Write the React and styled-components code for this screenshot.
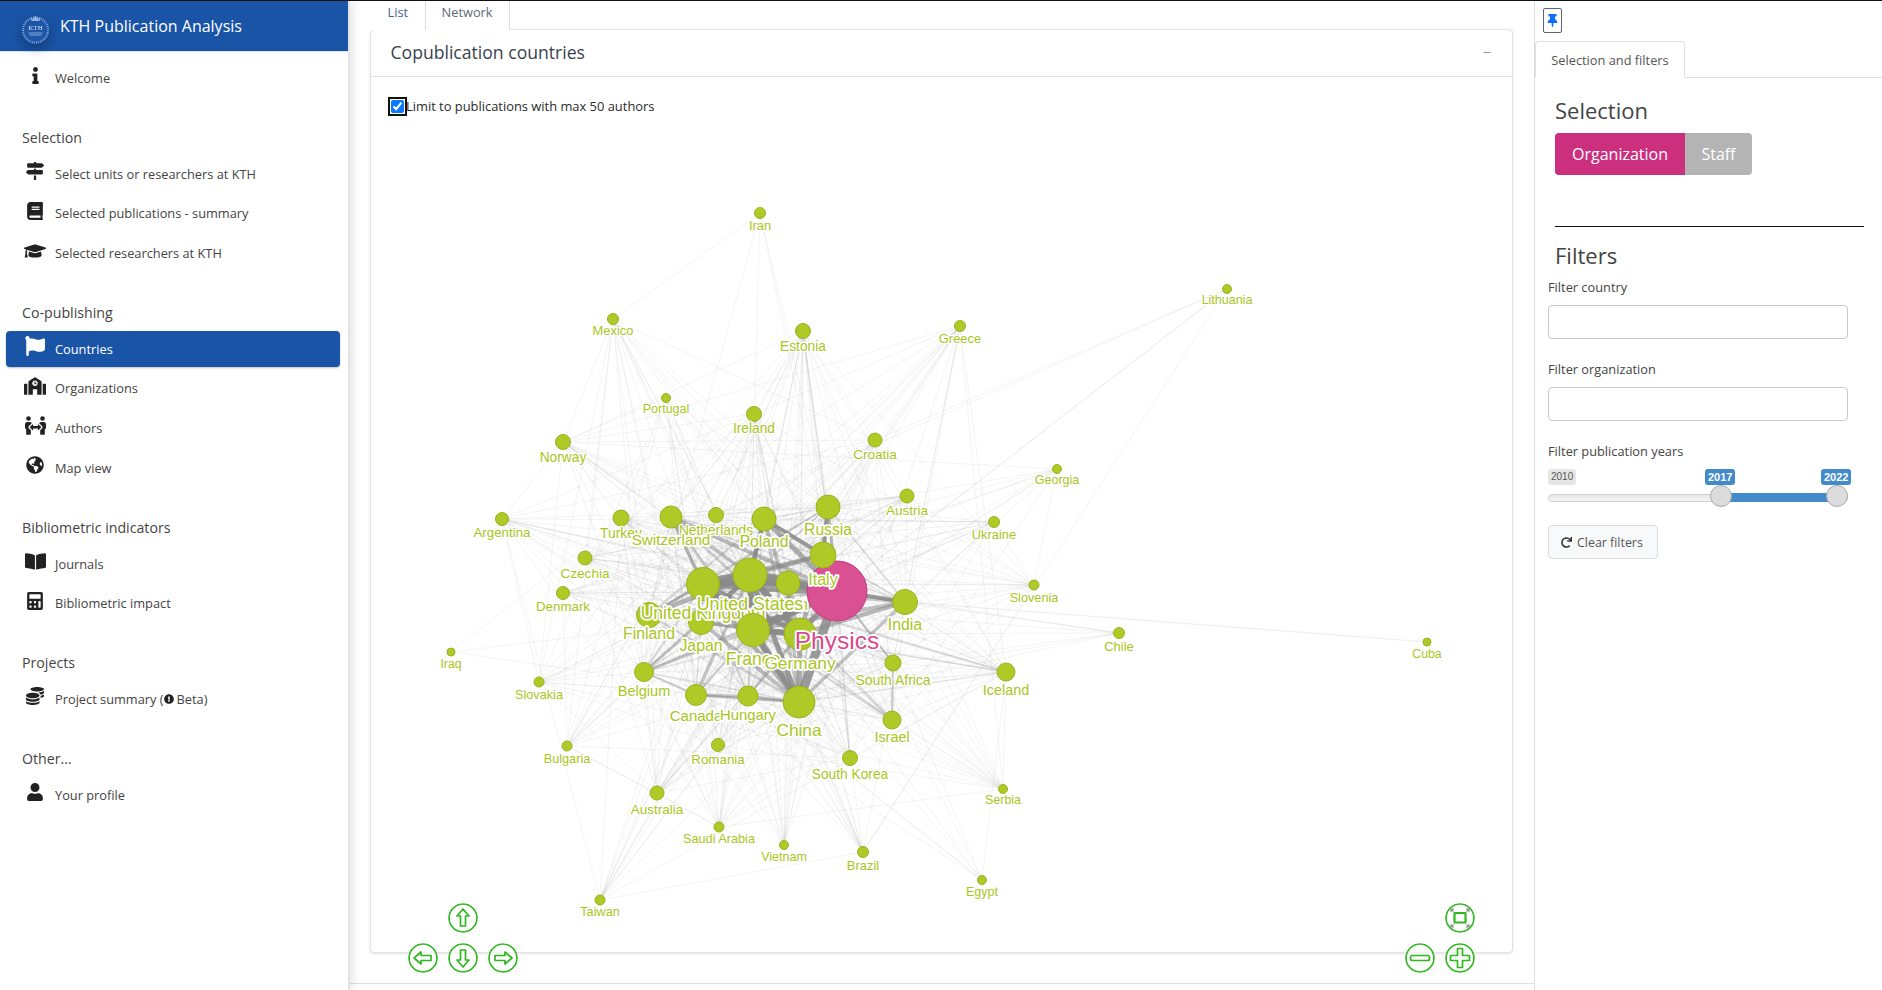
import React from "react";
import styled, { createGlobalStyle } from "styled-components";
import {
  FaInfo, FaMapSigns, FaBook, FaGraduationCap, FaFlag, FaSchool, FaPeopleArrows,
  FaGlobeAmericas, FaBookOpen, FaCalculator, FaCoins, FaUser, FaExclamationCircle,
  FaThumbtack, FaRedo,
} from "react-icons/fa";

const Global = createGlobalStyle`
  html, body { margin: 0; padding: 0; height: 100%; background: #fff; overflow: hidden; }
  body { font-family: "Open Sans", "Liberation Sans", sans-serif; font-size: 13px; color: #444; }
  * { box-sizing: border-box; }
`;

const Page = styled.div`
  display: grid;
  grid-template-columns: 350px 1184px 348px;
  height: 990px;
  border-top: 1px solid #111;
`;

/* ---------- sidebar ---------- */
const Sidebar = styled.aside`
  border-right: 2px solid #e3e3e6;
  box-shadow: 3px 0 8px rgba(0, 0, 0, 0.1);
  background: #fff;
  z-index: 2;
`;
const Brand = styled.header`
  height: 51px;
  background: #1a54a6;
  display: flex;
  align-items: center;
  gap: 9px;
  padding-left: 20px;
  color: #fff;
  font-size: 16px;
  border-bottom: 1px solid #dbe3ee;
`;
const LogoWrap = styled.svg`
  width: 31px;
  height: 36px;
  margin-top: 1px;
  overflow: visible;
  filter: drop-shadow(0 5px 6px rgba(0, 0, 0, 0.28));
`;
const Nav = styled.nav`
  padding-top: 8px;
`;
const NavItem = styled.div`
  height: 36px;
  margin: ${(p) => (p.$first ? "0" : "3.7px")} 8px 0 6px;
  padding-left: 16px;
  display: flex;
  align-items: center;
  border-radius: 4px;
  background: ${(p) => (p.$active ? "#1a54a6" : "transparent")};
  color: ${(p) => (p.$active ? "#fff" : "#444")};
  box-shadow: ${(p) => (p.$active ? "0 1px 2px rgba(0,0,0,.25)" : "none")};
  font-size: 12.8px;
`;
const NavIcon = styled.span`
  width: 26px;
  margin-right: 7px;
  display: flex;
  justify-content: center;
  margin-bottom: 5px;
  font-size: ${(p) => p.$size || 18}px;
  color: ${(p) => (p.$active ? "#fff" : "#222")};
`;
const InlineIcon = styled.span`
  display: inline-flex;
  font-size: 10px;
  color: #222;
  margin: 0 3px 0 0;
  vertical-align: 0;
`;
const NavSection = styled.section`
  margin-top: 31.7px;
`;
const NavTitle = styled.h4`
  margin: 0 0 8px 22px;
  height: 20px;
  line-height: 20px;
  font-size: 14.2px;
  font-weight: 400;
  color: #444;
`;

/* ---------- main ---------- */
const Main = styled.main`
  height: 983px;
  border-bottom: 1px solid #e2e2e2;
  padding: 0 21px 0 20px;
  background: #fff;
`;
const Tabs = styled.div`
  display: flex;
  height: 28px;
  padding-left: 1px;
`;
const TabLink = styled.div`
  padding: 0 ${(p) => (p.$active ? "16px" : "15.5px")};
  height: 29px;
  line-height: 22px;
  font-size: 12.8px;
  color: ${(p) => (p.$active ? "#5b6b7a" : "#44688a")};
  border: 1px solid ${(p) => (p.$active ? "#dcdcdc" : "transparent")};
  border-top: none;
  border-bottom: none;
  background: #fff;
  position: relative;
  z-index: 1;
`;
const Card = styled.section`
  position: relative;
  height: 924px;
  border: 1px solid #e2e2e2;
  border-radius: 4px;
  box-shadow: 0 1px 3px rgba(0, 0, 0, 0.1);
  background: #fff;
`;
const CardHead = styled.div`
  height: 47px;
  display: flex;
  align-items: center;
  justify-content: space-between;
  padding: 0 21px 2px 19.5px;
  border-bottom: 1px solid #e2e2e2;
  font-size: 17.6px;
  color: #38424d;
`;
const Collapse = styled.span`
  color: #999;
  font-size: 15px;
`;
const CheckRow = styled.label`
  display: flex;
  align-items: center;
  position: relative;
  z-index: 1;
  margin: 20px 0 0 18px;
  height: 18px;
  font-size: 12.9px;
  font-weight: 500;
  color: #2b2b2b;
`;
const Check = styled.input`
  width: 13px;
  height: 13px;
  margin: 0 2px 0 2px;
  accent-color: #0a78ff;
  outline: 2px solid #111;
  outline-offset: 1px;
  border-radius: 2px;
`;
const Canvas = styled.svg`
  position: absolute;
  inset: 0;
  width: 100%;
  height: 100%;
`;
const NavCluster = styled.div`
  position: absolute;
  bottom: -21px;
  display: grid;
  grid-template-columns: repeat(${(p) => p.$cols}, 30px);
  grid-auto-rows: 30px;
  gap: 10px;
  ${(p) => (p.$right ? "right: 37px;" : "left: 37px;")}
`;
const NavSlot = styled.div`
  grid-column: ${(p) => p.$col};
  grid-row: ${(p) => p.$row};
`;
const CtlSvg = styled.svg`
  display: block;
  width: 30px;
  height: 30px;
  background: rgba(255, 255, 255, 0.6);
  border-radius: 50%;
`;

/* ---------- right panel ---------- */
const Panel = styled.aside`
  border-left: 1px solid #dcdde0;
  padding-top: 7px;
`;
const PinBtn = styled.button`
  display: flex;
  align-items: center;
  justify-content: center;
  width: 19px;
  height: 25px;
  margin-left: 8px;
  padding: 0;
  background: #fff;
  border: 1px solid #5c6670;
  border-radius: 2px;
  color: #0d6efd;
  font-size: 13px;
`;
const PanelTabs = styled.div`
  margin-top: 8px;
  height: 37px;
  border-bottom: 1px solid #e0e0e0;
  display: flex;
`;
const PanelTab = styled.div`
  width: 150px;
  height: 37px;
  border: 1px solid #e0e0e0;
  border-bottom: 1px solid #fff;
  border-radius: 4px 4px 0 0;
  display: flex;
  align-items: center;
  justify-content: center;
  font-size: 12.8px;
  color: #555;
  background: #fff;
`;
const PanelBody = styled.div`
  padding: 18px 0 0 13px;
`;
const Heading = styled.h3`
  margin: 0 0 0 7px;
  height: 30px;
  line-height: 28px;
  font-size: 22px;
  font-weight: 400;
  color: #444;
`;
const BtnGroup = styled.div`
  display: flex;
  margin: 7px 0 0 7px;
  height: 42px;
`;
const Toggle = styled.div`
  width: ${(p) => p.$w}px;
  display: flex;
  align-items: center;
  justify-content: center;
  background: ${(p) => p.$bg};
  color: #fff;
  font-size: 16px;
  border-radius: ${(p) => p.$radius};
`;
const Rule = styled.hr`
  margin: 51px 0 14px 7px;
  width: 309px;
  border: none;
  border-top: 1px solid #111;
  height: 0;
`;
const FieldLabel = styled.div`
  height: 20px;
  line-height: 20px;
  font-size: 12.8px;
  font-weight: 500;
  color: #444;
  margin-top: ${(p) => p.$mt}px;
`;
const TextInput = styled.div`
  width: 300px;
  height: 34px;
  margin-top: 8px;
  border: 1px solid #c9c9c9;
  border-radius: 4px;
  background: #fff;
`;
const Slider = styled.div`
  position: relative;
  width: 300px;
  height: 50px;
  margin-top: 8px;
`;
const Track = styled.div`
  position: absolute;
  top: 25px;
  left: 0;
  right: 0;
  height: 8px;
  border: 1px solid #cfcfcf;
  border-radius: 5px;
  background: linear-gradient(#e6e6e6, #f6f6f6);
`;
const TrackFill = styled.div`
  position: absolute;
  top: 24px;
  left: 173px;
  right: 11px;
  height: 9px;
  background: #428bca;
`;
const Handle = styled.div`
  position: absolute;
  top: 16px;
  left: ${(p) => p.$x}px;
  width: 22px;
  height: 22px;
  border-radius: 50%;
  border: 1px solid #aaa;
  background: #dcdcdc;
`;
const SliderTag = styled.div`
  position: absolute;
  top: 0;
  left: ${(p) => p.$x}px;
  height: 16px;
  padding: 0 3px;
  line-height: 16px;
  font-family: "Liberation Sans", Arial, sans-serif;
  font-size: ${(p) => (p.$muted ? 10 : 11)}px;
  font-weight: ${(p) => (p.$muted ? 400 : 700)};
  border-radius: 3px;
  color: ${(p) => (p.$muted ? "#555" : "#fff")};
  background: ${(p) => (p.$muted ? "#e6e6e6" : "#428bca")};
`;
const ClearBtn = styled.button`
  display: flex;
  align-items: center;
  gap: 5px;
  width: 110px;
  height: 34px;
  margin-top: 6px;
  padding: 0 0 0 12px;
  border: 1px solid #dcdcdc;
  border-radius: 4px;
  background: #f8f9fa;
  font: inherit;
  font-size: 12.4px;
  color: #555;
`;
const ReloadIcon = styled.span`
  display: flex;
  font-size: 11px;
  color: #333;
`;

/* ---------- network data ---------- */
const N = [
  ["Iran", 760, 213, 5.5, 225], ["Mexico", 613, 319, 5.5, 330], ["Estonia", 803, 331, 7.5, 346],
  ["Greece", 960, 326, 5.5, 338], ["Lithuania", 1227, 289, 4.5, 300], ["Portugal", 666, 398, 4.5, 409],
  ["Ireland", 754, 414, 7.5, 428], ["Croatia", 875, 440, 7, 454], ["Norway", 563, 442, 7.5, 457],
  ["Georgia", 1057, 469, 4.5, 480], ["Argentina", 502, 519, 6.5, 532], ["Austria", 907, 496, 7, 510],
  ["Ukraine", 994, 522, 5.5, 534], ["Turkey", 621, 518, 8, 533], ["Netherlands", 716, 515, 7.5, 530],
  ["Switzerland", 671, 517, 11, 539], ["Russia", 828, 507, 12, 529], ["Czechia", 585, 558, 7, 573],
  ["Denmark", 563, 593, 6.5, 606], ["Poland", 764, 519, 12, 541], ["Finland", 649, 615, 12.5, 633],
  ["Japan", 701, 622, 12.5, 645], ["Slovenia", 1034, 585, 5, 598], ["Chile", 1119, 633, 5.5, 646],
  ["Cuba", 1427, 642, 4, 654], ["Iraq", 451, 652, 4, 664], ["Slovakia", 539, 682, 5, 695],
  ["Iceland", 1006, 672, 9, 690], ["Belgium", 644, 672, 9.5, 691], ["South Africa", 893, 663, 8, 680],
  ["Bulgaria", 567, 746, 5, 759], ["Serbia", 1003, 789, 4.5, 800], ["Australia", 657, 793, 7, 809],
  ["Saudi Arabia", 719, 827, 5, 839], ["Vietnam", 784, 845, 4.5, 857], ["Brazil", 863, 852, 5.5, 865],
  ["Egypt", 982, 880, 4.5, 892], ["Taiwan", 600, 900, 5, 912], ["Romania", 718, 745, 6.5, 759],
  ["South Korea", 850, 758, 7.5, 774], ["Israel", 892, 720, 9, 737], ["India", 905, 602, 12.5, 624],
  ["China", 799, 702, 16, 730], ["Canada", 696, 695, 10.5, 715], ["Hungary", 748, 696, 10, 715],
  ["United Kingdom", 703, 584, 16.5, 613], ["Spain", 788, 583, 12, 604], ["United States", 750, 575, 17, 604],
  ["France", 753, 630, 16.5, 659], ["Germany", 800, 634, 16, 663],
  ["Physics", 837, 591, 30, 640, true], ["Italy", 823, 555, 13, 579],
];

const SPARSE = { Lithuania: 0.1, Cuba: 0.03, Chile: 0.3, Iran: 0.5, Georgia: 0.5, Egypt: 0.5, Iraq: 0.4 };
const STRONG = [
  ["United Kingdom", "United States", 10], ["United States", "Spain", 9], ["Spain", "Physics", 8],
  ["Physics", "China", 9], ["Physics", "France", 8], ["United Kingdom", "France", 7],
  ["United States", "France", 7], ["Physics", "India", 4], ["Physics", "Italy", 5], ["Italy", "Poland", 4],
  ["Russia", "Italy", 4], ["Germany", "United States", 6], ["France", "Germany", 6], ["India", "Cuba", 1.2],
  ["Canada", "China", 2.5], ["Hungary", "China", 2.5], ["Poland", "United States", 4], ["United Kingdom", "Finland", 3],
  ["South Africa", "Israel", 2], ["Physics", "South Africa", 2], ["Belgium", "Japan", 2.5], ["Lithuania", "Physics", 0.7],
  ["Chile", "Physics", 1], ["Estonia", "Physics", 1.4], ["United Kingdom", "Spain", 6], ["Japan", "United States", 5],
  ["Germany", "United Kingdom", 5], ["China", "United States", 5], ["France", "China", 4], ["Canada", "Hungary", 2.5],
  ["Belgium", "Canada", 2], ["Physics", "Russia", 3], ["Switzerland", "United Kingdom", 3],
];

function buildEdges() {
  let seed = 4242;
  const rnd = () => {
    seed = (seed * 16807) % 2147483647;
    return seed / 2147483647;
  };
  const out = [];
  for (let i = 0; i < N.length; i++) {
    for (let j = i + 1; j < N.length; j++) {
      const a = N[i];
      const b = N[j];
      const prob = Math.min(0.8, (a[3] * b[3]) / 115) * (SPARSE[a[0]] ?? 1) * (SPARSE[b[0]] ?? 1);
      if (rnd() > prob) continue;
      const weight = Math.min(a[3], 18) * Math.min(b[3], 18);
      const w = Math.max(0.8, Math.pow(weight / 256, 2.2) * 5 * (0.5 + rnd()));
      out.push({ a, b, w, o: Math.min(0.72, 0.02 + w * 0.13) });
    }
  }
  const byName = Object.fromEntries(N.map((n) => [n[0], n]));
  STRONG.forEach(([x, y, w]) => out.push({ a: byName[x], b: byName[y], w, o: w > 3 ? 0.85 : w > 1.5 ? 0.42 : 0.15 }));
  return out.sort((p, q) => p.w - q.w);
}
const EDGES = buildEdges();

const NodeLabel = styled.text`
  font-family: "Liberation Sans", Arial, sans-serif;
  text-anchor: middle;
  dominant-baseline: central;
  paint-order: stroke;
  stroke: #fff;
  stroke-width: ${(p) => (p.$big ? 3.5 : 2.5)}px;
  stroke-linejoin: round;
  fill: ${(p) => p.$fill};
  font-size: ${(p) => p.$size}px;
`;

function Network() {
  return (
    <Canvas viewBox="371 30 1141 922">
      {EDGES.map((e, i) => (
        <line key={i} x1={e.a[1]} y1={e.a[2]} x2={e.b[1]} y2={e.b[2]} stroke="#8a8a8a" strokeWidth={e.w} strokeOpacity={e.o} />
      ))}
      {N.map(([name, x, y, r, ly, pink]) => (
        <g key={name}>
          <circle cx={x} cy={y} r={r} fill={pink ? "#d95193" : "#afc926"} stroke={pink ? "#bf3d80" : "#9cb21f"} strokeWidth="1" />
          <NodeLabel x={x} y={ly + 0.3} $big={r > 9} $fill={pink ? "#d94a8e" : "#a9c61c"} $size={pink ? 24.5 : 10.6 + r * 0.42}>
            {name}
          </NodeLabel>
        </g>
      ))}
    </Canvas>
  );
}

const Ctl = ({ children }) => (
  <CtlSvg viewBox="0 0 30 30" fill="none" stroke="#2fb81f" strokeWidth="1.7" strokeLinejoin="round">
    <circle cx="15" cy="15" r="14" />
    {children}
  </CtlSvg>
);

const Logo = () => (
  <LogoWrap viewBox="0 0 31 36">
    <circle cx="15.5" cy="21" r="14" fill="#1d56a8" />
    <circle cx="15.5" cy="21" r="12.5" fill="none" stroke="#7fa3d6" strokeWidth="2" strokeDasharray="1 1" />
    <path d="M10.5 8l2 2 3-3 3 3 2-2-1 4h-8z" fill="#8fb0dd" />
    <text x="15.5" y="21" textAnchor="middle" fontFamily="Liberation Serif, serif" fontSize="7" fill="#d6e2f3">KTH</text>
    <path d="M8.5 24h14M9.5 26h12" stroke="#a5bfe3" strokeWidth=".8" />
  </LogoWrap>
);

const Item = ({ icon: Icon, size, active, first, children }) => (
  <NavItem $active={active} $first={first}>
    <NavIcon $active={active} $size={size}><Icon /></NavIcon>
    <span>{children}</span>
  </NavItem>
);

export default function App() {
  return (
    <>
      <Global />
      <Page>
        <Sidebar>
          <Brand><Logo />KTH Publication Analysis</Brand>
          <Nav>
            <Item icon={FaInfo} first size={17}>Welcome</Item>
            <NavSection>
              <NavTitle>Selection</NavTitle>
              <Item icon={FaMapSigns} first>Select units or researchers at KTH</Item>
              <Item icon={FaBook}>Selected publications - summary</Item>
              <Item icon={FaGraduationCap} size={22}>Selected researchers at KTH</Item>
            </NavSection>
            <NavSection>
              <NavTitle>Co-publishing</NavTitle>
              <Item icon={FaFlag} first active size={20}>Countries</Item>
              <Item icon={FaSchool} size={22}>Organizations</Item>
              <Item icon={FaPeopleArrows} size={21}>Authors</Item>
              <Item icon={FaGlobeAmericas}>Map view</Item>
            </NavSection>
            <NavSection>
              <NavTitle>Bibliometric indicators</NavTitle>
              <Item icon={FaBookOpen} first size={21}>Journals</Item>
              <Item icon={FaCalculator}>Bibliometric impact</Item>
            </NavSection>
            <NavSection>
              <NavTitle>Projects</NavTitle>
              <Item icon={FaCoins} first>
                Project summary (<InlineIcon><FaExclamationCircle /></InlineIcon>Beta)
              </Item>
            </NavSection>
            <NavSection>
              <NavTitle>Other...</NavTitle>
              <Item icon={FaUser} first>Your profile</Item>
            </NavSection>
          </Nav>
        </Sidebar>

        <Main>
          <Tabs>
            <TabLink>List</TabLink>
            <TabLink $active>Network</TabLink>
          </Tabs>
          <Card>
            <Network />
            <CardHead>
              <span>Copublication countries</span>
              <Collapse>−</Collapse>
            </CardHead>
            <CheckRow>
              <Check type="checkbox" checked readOnly />
              Limit to publications with max 50 authors
            </CheckRow>
            <NavCluster $cols={3}>
              <NavSlot $col={2} $row={1}>
                <Ctl><path d="M15 6l6 7h-3.5v10h-5V13H9z" /></Ctl>
              </NavSlot>
              <NavSlot $col={1} $row={2}>
                <Ctl><path d="M6 15l7-6v3.5h10v5H13V21z" /></Ctl>
              </NavSlot>
              <NavSlot $col={2} $row={2}>
                <Ctl><path d="M15 24l-6-7h3.5V7h5v10H21z" /></Ctl>
              </NavSlot>
              <NavSlot $col={3} $row={2}>
                <Ctl><path d="M24 15l-7 6v-3.5H7v-5h10V9z" /></Ctl>
              </NavSlot>
            </NavCluster>
            <NavCluster $cols={2} $right>
              <NavSlot $col={2} $row={1}>
                <Ctl>
                  <rect x="9.5" y="10" width="11" height="9.5" strokeWidth="2.2" />
                  <path d="M6 9V6h3M6 6l2.5 2.5M24 9V6h-3M24 6l-2.5 2.5M6 21v3h3M6 24l2.5-2.5M24 21v3h-3M24 24l-2.5-2.5" stroke="#8a8a8a" strokeWidth="1.1" />
                </Ctl>
              </NavSlot>
              <NavSlot $col={1} $row={2}>
                <Ctl><rect x="5.5" y="12.5" width="19" height="5" rx="2" /></Ctl>
              </NavSlot>
              <NavSlot $col={2} $row={2}>
                <Ctl><path d="M12.5 5.5h5v7h7v5h-7v7h-5v-7h-7v-5h7z" /></Ctl>
              </NavSlot>
            </NavCluster>
          </Card>
        </Main>

        <Panel>
          <PinBtn><FaThumbtack /></PinBtn>
          <PanelTabs><PanelTab>Selection and filters</PanelTab></PanelTabs>
          <PanelBody>
            <Heading>Selection</Heading>
            <BtnGroup>
              <Toggle $w={130} $bg="#cb2f7e" $radius="4px 0 0 4px">Organization</Toggle>
              <Toggle $w={67} $bg="#b4b4b4" $radius="0 4px 4px 0">Staff</Toggle>
            </BtnGroup>
            <Rule />
            <Heading>Filters</Heading>
            <FieldLabel $mt={6}>Filter country</FieldLabel>
            <TextInput />
            <FieldLabel $mt={20}>Filter organization</FieldLabel>
            <TextInput />
            <FieldLabel $mt={20}>Filter publication years</FieldLabel>
            <Slider>
              <Track />
              <TrackFill />
              <SliderTag $x={0} $muted>2010</SliderTag>
              <SliderTag $x={157}>2017</SliderTag>
              <SliderTag $x={273}>2022</SliderTag>
              <Handle $x={162} />
              <Handle $x={278} />
            </Slider>
            <ClearBtn><ReloadIcon><FaRedo /></ReloadIcon>Clear filters</ClearBtn>
          </PanelBody>
        </Panel>
      </Page>
    </>
  );
}
